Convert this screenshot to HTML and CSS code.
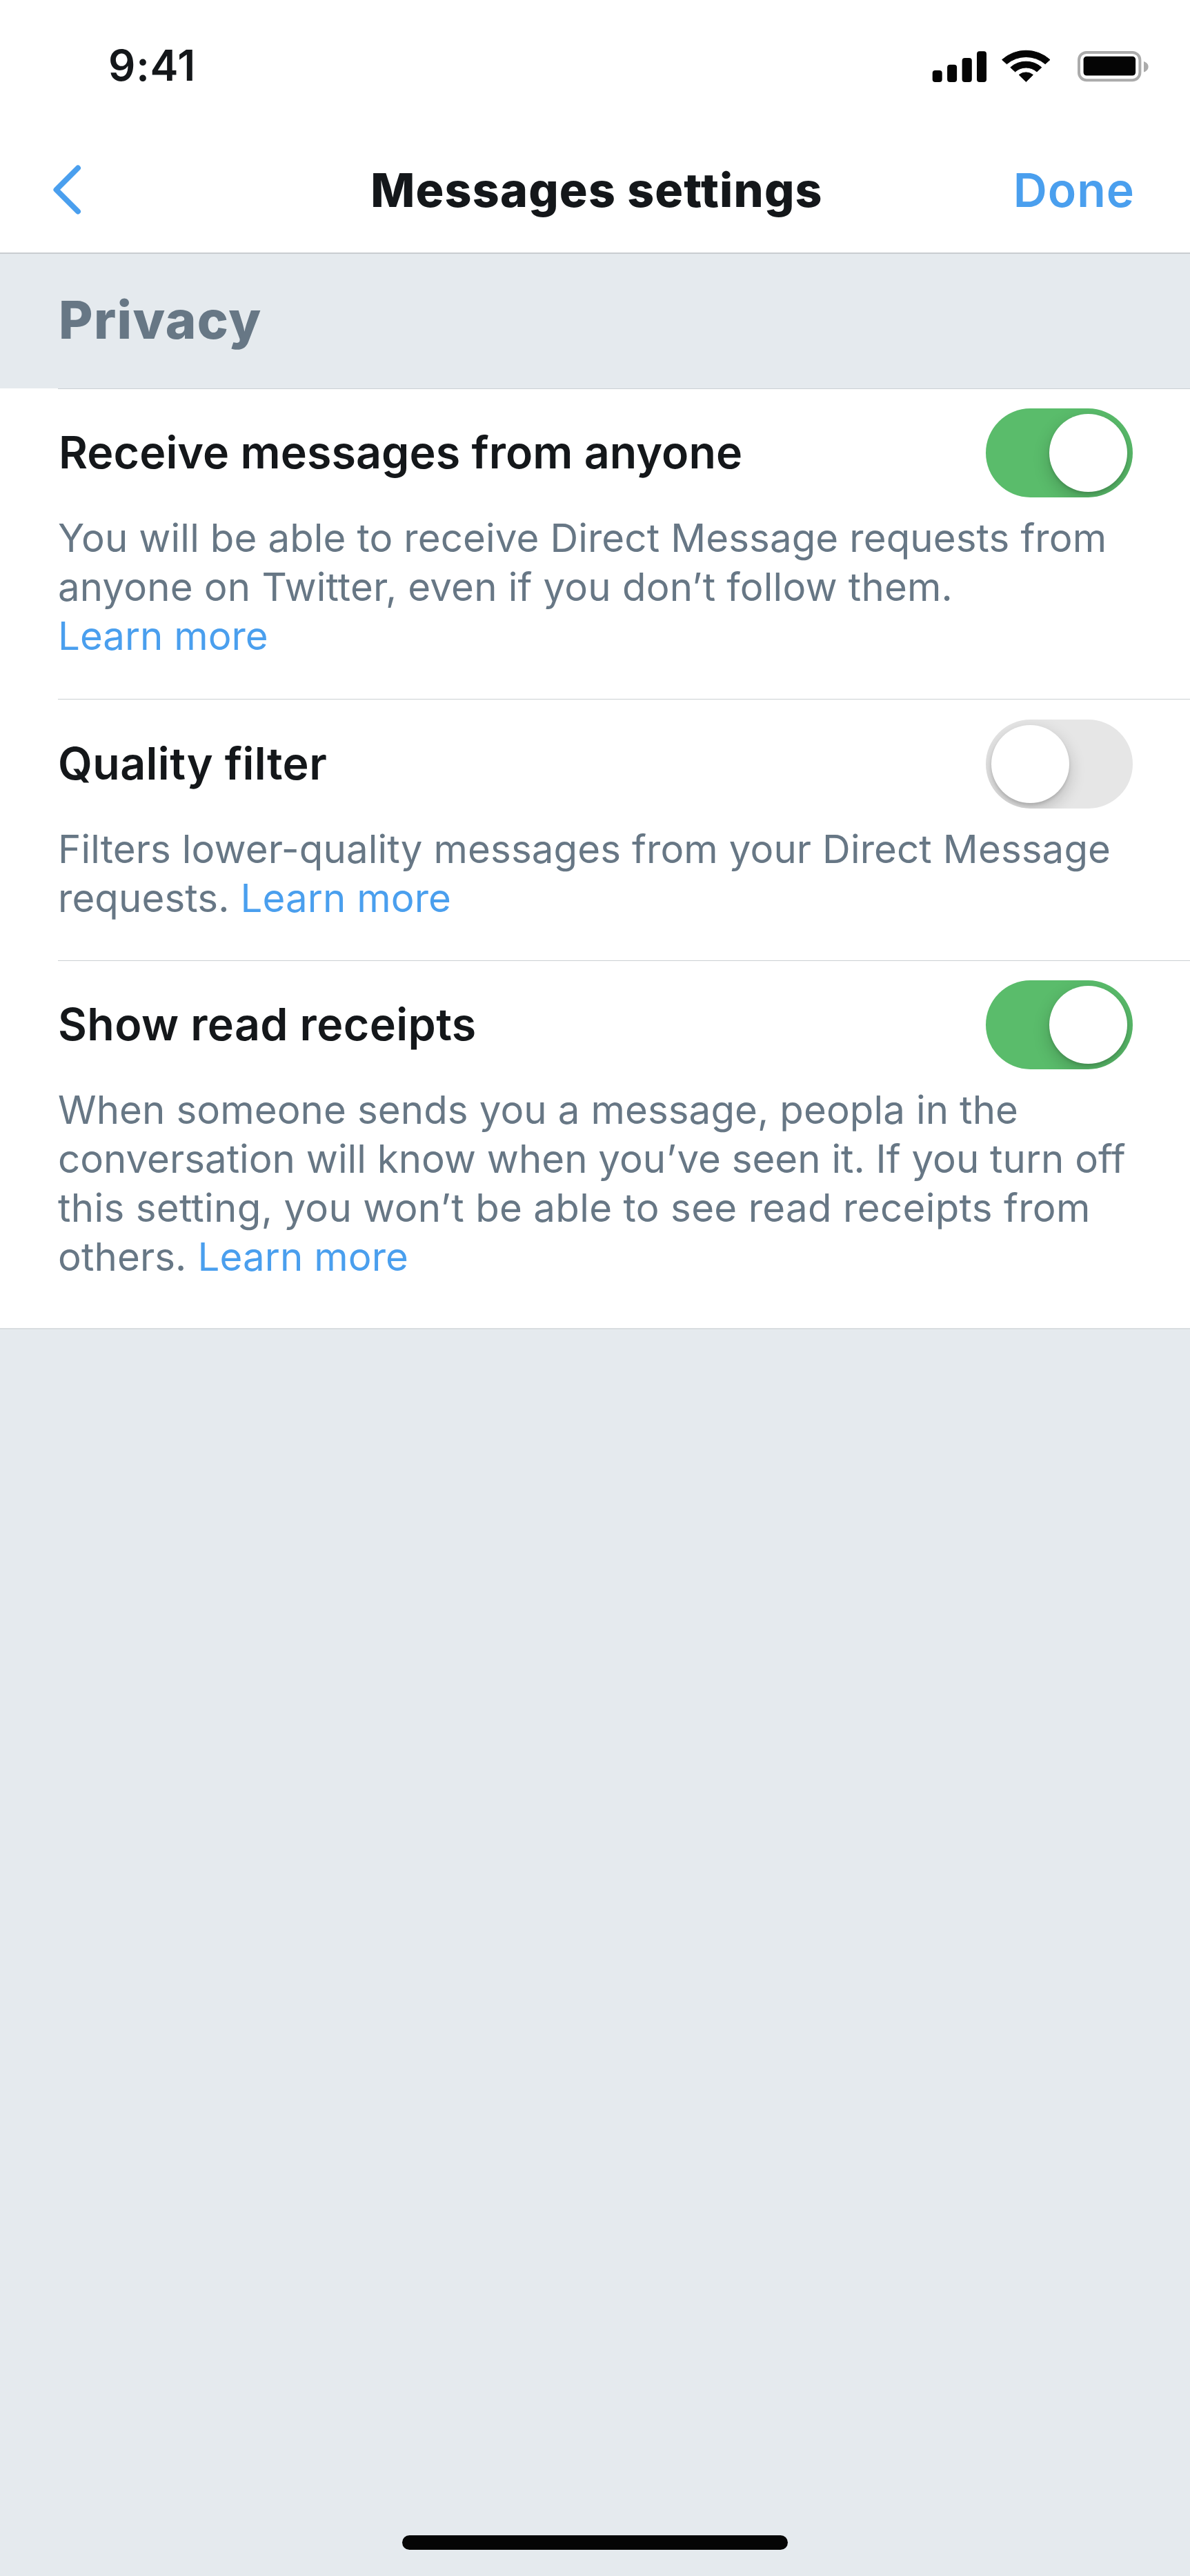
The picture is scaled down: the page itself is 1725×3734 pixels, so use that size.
FILE: index.html
```
<!DOCTYPE html>
<html lang="en">
<head>
<meta charset="utf-8">
<title>Messages settings</title>
<link rel="stylesheet" href="styles.css">
</head>
<body>
<div class="screen">
  <header class="header">
    <div class="status">
      <span class="status-time">9:41</span>
      <div class="status-icons">
        <svg class="signal" width="79" height="46" viewBox="0 0 79 46">
          <rect x="0.7" y="29" width="14" height="17" rx="4"/>
          <rect x="22.1" y="20.8" width="14" height="25.2" rx="4"/>
          <rect x="43.6" y="11" width="14.2" height="35" rx="4"/>
          <rect x="65" y="1.2" width="14" height="44.8" rx="4"/>
        </svg>
        <svg class="wifi" width="73" height="48" viewBox="0 0 73 48">
          <path d="M1.6 14.6A51.8 51.8 0 0 1 71 14.6L64.2 20.7A43.2 43.2 0 0 0 8.4 20.7Z"/>
          <path d="M13.8 25.7A33.9 33.9 0 0 1 58.8 25.7L52 32A23.5 23.5 0 0 0 20.6 32Z"/>
          <path d="M26.2 36.5A16 16 0 0 1 46.4 36.5L36.3 46.4Z"/>
        </svg>
        <svg class="battery" width="103" height="46" viewBox="0 0 103 46">
          <rect class="battery-shell" x="2" y="2.9" width="88.4" height="40.3" rx="11"/>
          <rect x="8.6" y="8.7" width="75.5" height="27.8" rx="4.5"/>
          <path class="battery-tip" d="M96 16C100.500 17.500 102.600 20.500 102.600 23.700C102.600 27 100.500 30 96 31.500Z"/>
        </svg>
      </div>
    </div>
    <nav class="nav">
      <a class="back" href="#" aria-label="Back">
        <svg width="41" height="72" viewBox="0 0 41 72">
          <path d="M36 4.500L4.500 36L36 67.500"/>
        </svg>
      </a>
      <h1 class="nav-title">Messages settings</h1>
      <a class="nav-done" href="#">Done</a>
    </nav>
  </header>
  <main>
    <h2 class="section-title">Privacy</h2>
    <ul class="settings">
      <li class="setting">
        <div class="setting-head">
          <span class="setting-name">Receive messages from anyone</span>
          <span class="toggle toggle-on"><span class="knob"></span></span>
        </div>
        <p class="setting-text">You will be able to receive Direct Message requests from<br><span class="loose">anyone on Twitter, even if you don’t follow them.</span><br><a class="link tight" href="#">Learn more</a></p>
      </li>
      <li class="setting setting-low">
        <div class="setting-head">
          <span class="setting-name name-loose">Quality filter</span>
          <span class="toggle"><span class="knob"></span></span>
        </div>
        <p class="setting-text">Filters lower-quality messages from your Direct Message<br>requests. <a class="link" href="#">Learn more</a></p>
      </li>
      <li class="setting">
        <div class="setting-head">
          <span class="setting-name name-loose">Show read receipts</span>
          <span class="toggle toggle-on"><span class="knob"></span></span>
        </div>
        <p class="setting-text">When someone sends you a message, peopla in the<br><span class="tight">conversation will know when you’ve seen it. If you turn off</span><br><span class="looser">this setting, you won’t be able to see read receipts from</span><br>others. <a class="link" href="#">Learn more</a></p>
      </li>
    </ul>
  </main>
  <div class="home-bar"></div>
</div>
</body>
</html>
```
FILE: styles.css
```
* {
  box-sizing: border-box;
}

body {
  margin: 0;
  background: #e5eaee;
  color: #14171a;
  font-family: Inter, "Liberation Sans", sans-serif;
}

h1, h2, p, ul {
  margin: 0;
  padding: 0;
}

a {
  color: #4a9fee;
  text-decoration: none;
}

svg {
  display: block;
}

.screen {
  display: flex;
  flex-direction: column;
  height: 3734px;
}

.header {
  height: 368px;
  background: #fff;
  border-bottom: 2px solid #c9cdd0;
}

.status {
  display: flex;
  align-items: center;
  justify-content: space-between;
  height: 190px;
  padding: 0 60px 0 157px;
}

.status-time {
  font-size: 61.500px;
  font-weight: 600;
  line-height: 74px;
  letter-spacing: 0.800px;
}

.status-icons {
  display: flex;
  align-items: center;
  padding-top: 1px;
  fill: #050505;
}

.wifi {
  margin: 0 38px 0 21px;
  stroke: #050505;
  stroke-width: 1;
  stroke-linejoin: round;
}

.battery-shell {
  fill: none;
  stroke: #ababab;
  stroke-width: 4;
}

.battery-tip {
  fill: #ababab;
}

.nav {
  display: grid;
  grid-template-columns: 1fr auto 1fr;
  align-items: center;
  height: 176px;
  padding: 0 80px 7px 77px;
}

.back path {
  fill: none;
  stroke: #4a9fee;
  stroke-width: 8;
  stroke-linecap: round;
  stroke-linejoin: round;
}

.nav-title {
  padding-left: 8px;
  font-size: 68px;
  font-weight: 800;
  line-height: 82px;
  letter-spacing: 1.200px;
}

.nav-done {
  justify-self: end;
  font-size: 68px;
  font-weight: 560;
  line-height: 82px;
  letter-spacing: 1px;
}

.section-title {
  height: 195px;
  padding: 0 85px;
  color: #677785;
  font-size: 76px;
  font-weight: 800;
  line-height: 190px;
  letter-spacing: 1.400px;
}

.settings {
  list-style: none;
  background: #fff;
  border-bottom: 2px solid #d9dde0;
}

.setting {
  padding-left: 84px;
}

.setting::before {
  content: "";
  display: block;
  height: 1px;
  background: #cbd0d3;
}

.setting-head {
  display: flex;
  align-items: center;
  justify-content: space-between;
  padding: 28px 83px 23px 0;
}

.setting-name {
  padding: 0 0 2px 1px;
  font-size: 64.500px;
  font-weight: 600;
  line-height: 78px;
  letter-spacing: 0.070px;
}

.name-loose {
  padding-left: 0;
  letter-spacing: 0.400px;
}

.toggle {
  display: flex;
  width: 213px;
  height: 129px;
  padding: 8px;
  border-radius: 65px;
  background: #e6e6e6;
  overflow: hidden;
}

.toggle-on {
  justify-content: flex-end;
  background: #5abc6b;
}

.knob {
  width: 113px;
  height: 113px;
  border-radius: 50%;
  background: #fff;
  box-shadow: 0 9px 24px rgba(0, 0, 0, 0.2), 0 3px 4px rgba(0, 0, 0, 0.12);
}

.setting-text {
  padding-bottom: 56px;
  color: #677785;
  font-size: 56.400px;
  line-height: 71px;
  letter-spacing: 0.100px;
  white-space: nowrap;
}

.setting-low .setting-head {
  padding-top: 29px;
}

.setting-low .setting-text {
  padding-bottom: 55px;
}

.setting:last-child .setting-text {
  padding-bottom: 68px;
}

.loose {
  letter-spacing: 0.180px;
}

.looser {
  letter-spacing: 0.320px;
}

.tight {
  letter-spacing: 0;
}

.home-bar {
  width: 559px;
  height: 21px;
  margin: auto auto 38px;
  border-radius: 11px;
  background: #050505;
}
```
